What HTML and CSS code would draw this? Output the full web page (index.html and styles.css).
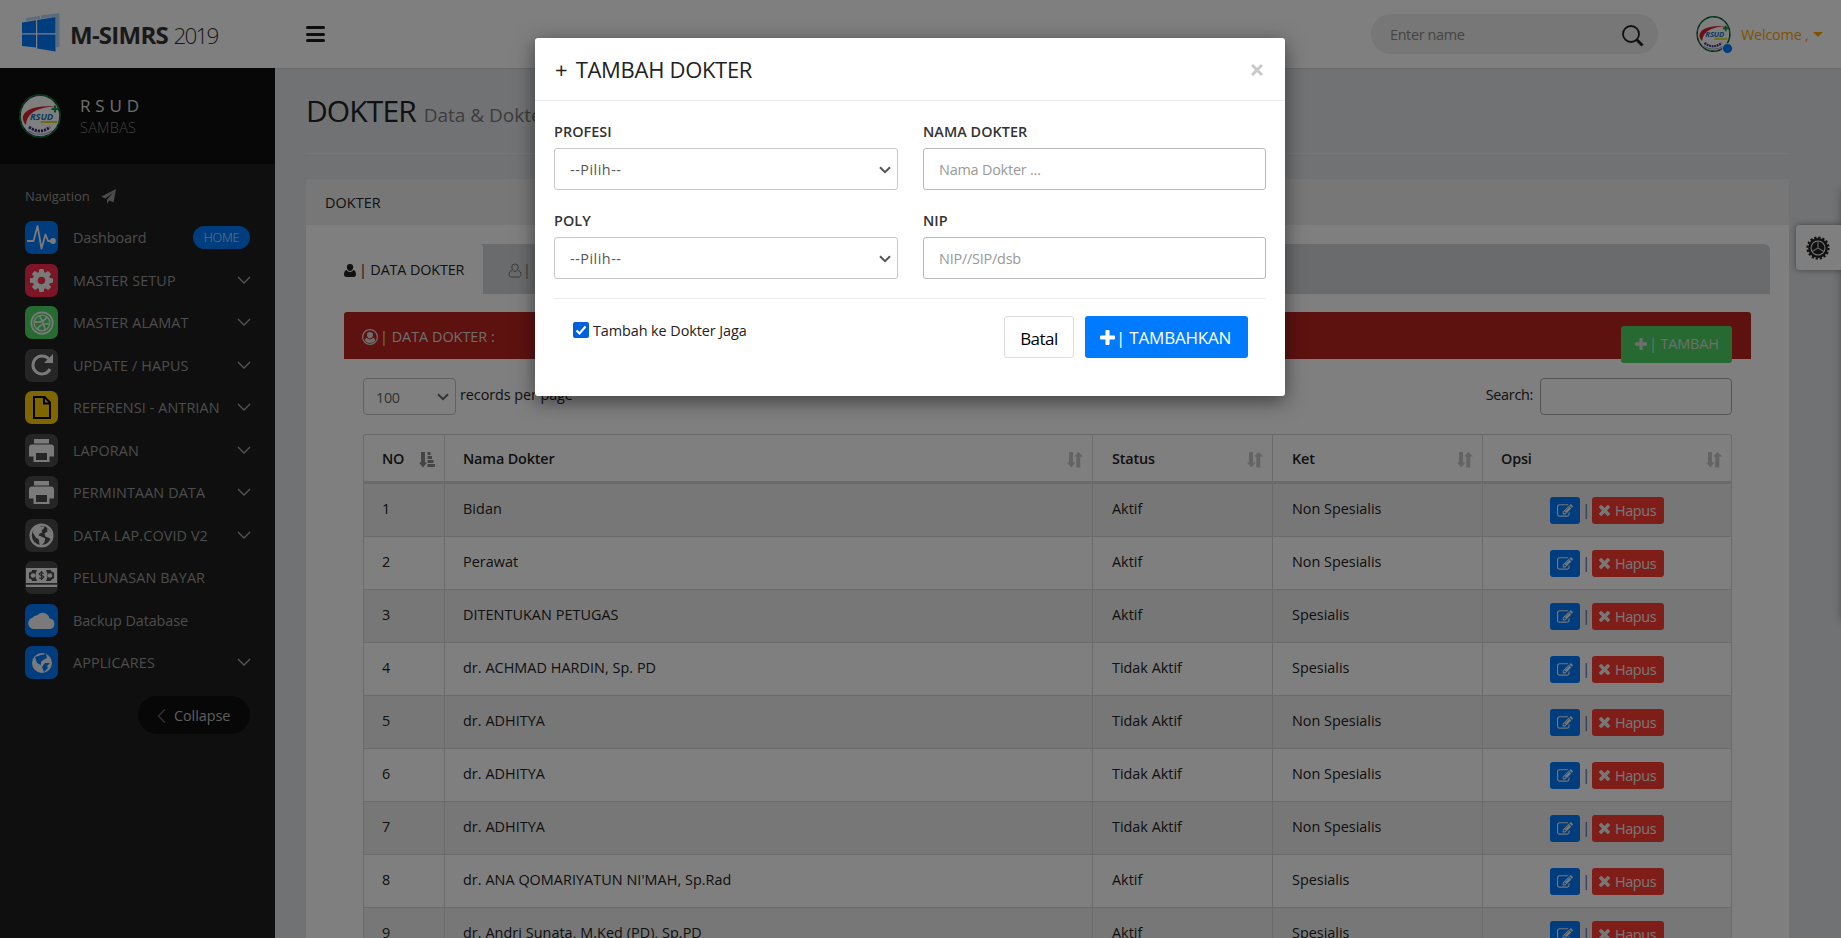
FILE: index.html
```html
<!DOCTYPE html>
<html lang="id">
<head>
<meta charset="utf-8">
<title>M-SIMRS 2019</title>
<link rel="stylesheet" href="styles.css">
</head>
<body>
<svg class="defs" width="0" height="0">
  <symbol id="plus" viewBox="192 128 1408 1408"><path d="M1600 736v192q0 40-28 68t-68 28h-416v416q0 40-28 68t-68 28h-192q-40 0-68-28t-28-68v-416h-416q-40 0-68-28t-28-68v-192q0-40 28-68t68-28h416v-416q0-40 28-68t68-28h192q40 0 68 28t28 68v416h416q40 0 68 28t28 68z"/></symbol>
  <symbol id="times" viewBox="302 366 1188 1188"><path d="M1490 1322q0 40-28 68l-136 136q-28 28-68 28t-68-28l-294-294-294 294q-28 28-68 28t-68-28l-136-136q-28-28-28-68t28-68l294-294-294-294q-28-28-28-68t28-68l136-136q28-28 68-28t68 28l294 294 294-294q28-28 68-28t68 28l136 136q28 28 28 68t-28 68l-294 294 294 294q28 28 28 68z"/></symbol>
  <symbol id="edit" viewBox="0 0 1792 1792"><path d="M888 1184l116-116-152-152-116 116v56h96v96h56zm440-720q-16-16-33 1l-350 350q-17 17-1 33t33-1l350-350q17-17 1-33zm80 594v190q0 119-84.500 203.500t-203.500 84.500h-832q-119 0-203.500-84.500t-84.500-203.500v-832q0-119 84.500-203.500t203.500-84.500h832q63 0 117 25 15 7 18 23 3 17-9 29l-49 49q-14 14-32 8-23-6-45-6h-832q-66 0-113 47t-47 113v832q0 66 47 113t113 47h832q66 0 113-47t47-113v-126q0-13 9-22l64-64q15-15 35-7t20 29zm-96-738l288 288-672 672h-288v-288zm444 132l-92 92-288-288 92-92q28-28 68-28t68 28l152 152q28 28 28 68t-28 68z"/></symbol>
  <symbol id="cog" viewBox="128 128 1536 1536"><path d="M1152 896q0-106-75-181t-181-75-181 75-75 181 75 181 181 75 181-75 75-181zm512-109v222q0 12-8 23t-20 13l-185 28q-19 54-39 91 35 50 107 138 10 12 10 25t-9 23q-27 37-99 108t-94 71q-12 0-26-9l-138-108q-44 23-91 38-16 136-29 186-7 28-36 28h-222q-14 0-24.500-8.500t-11.500-21.500l-28-184q-49-16-90-37l-141 107q-10 9-25 9-14 0-25-11-126-114-165-168-7-10-7-23 0-12 8-23 15-21 51-66.500t54-70.500q-27-50-41-99l-183-27q-13-2-21-12.500t-8-23.500v-222q0-12 8-23t19-13l186-28q14-46 39-92-40-57-107-138-10-12-10-24 0-10 9-23 26-36 98.500-107.500t94.500-71.500q13 0 26 10l138 107q44-23 91-38 16-136 29-186 7-28 36-28h222q14 0 24.500 8.500t11.500 21.500l28 184q49 16 90 37l142-107q9-9 24-9 13 0 25 10 129 119 165 170 7 8 7 22 0 12-8 23-15 21-51 66.500t-54 70.500q26 50 41 98l183 28q13 2 21 12.500t8 23.500z"/></symbol>
  <symbol id="printer" viewBox="0 0 25 23"><path fill-rule="evenodd" d="M5 0h15v4.500H5zM3 5.500h19a3 3 0 0 1 3 3v9h-4.500V23h-16v-5.500H0v-9a3 3 0 0 1 3-3zM7 14v7h11v-7z"/></symbol>
  <symbol id="down" viewBox="0 0 14 9"><path d="M1 1l6 6 6-6" fill="none" stroke="currentColor" stroke-width="1.300"/></symbol>
  <symbol id="caret" viewBox="0 0 12 8"><path d="M1 1.200l5 5 5-5" fill="none" stroke="currentColor" stroke-width="2"/></symbol>
  <symbol id="sort" viewBox="0 0 16 16"><path d="M2 0h4v10.500h2.500L4.300 15.500 0 10.500h2zM9.300 15.500h4V4.500H16L11.500 0 7.200 4.500h2.100z"/></symbol>
  <symbol id="sorted" viewBox="0 0 16 16"><path d="M2 0h4v10.500h2L3.900 15.500 0 10.500h2zM8.500 0h3v3h-3zM8.500 4h4.500v3H8.500zM8.500 8h6v3h-6zM8.500 12h7.500v3H8.500z"/></symbol>
  <symbol id="user" viewBox="0 0 12 13"><path d="M6 0a3.200 3.200 0 0 1 3.200 3.300C9.200 5.200 7.800 7 6 7S2.800 5.200 2.800 3.300A3.200 3.200 0 0 1 6 0zM2.600 6C3.400 7.200 4.600 7.900 6 7.900S8.600 7.200 9.400 6C11.300 6.200 12 8.500 12 10.600 12 12 11 13 9.800 13H2.200C1 13 0 12 0 10.600 0 8.500.7 6.200 2.600 6z"/></symbol>
  <symbol id="earth" viewBox="0 0 26 26"><circle cx="13" cy="13" r="11.300" fill="none" stroke="currentColor" stroke-width="2.400"/><path d="M10 2l3 2 2-1 1 2-3 3 1 2-3 1-1 2 3 1 4 2-1 4-4 5-1-3-1-5-3-2-3-5 1-4zM19 5l4 5 0 7-3-2-3-1-1-3 3-2z"/></symbol>
  <symbol id="crest" viewBox="0 0 42 44">
    <ellipse cx="21" cy="22" rx="20" ry="21" fill="#fff" stroke="#0e7d3e" stroke-width="1.800"/>
    <ellipse cx="21" cy="22" rx="20" ry="21" fill="none" stroke="#333" stroke-width="1.200" stroke-dasharray="3 5"/>
    <path d="M7 31C-2 21 8 10 37 12.500 20 13 8 18 7 31z" fill="#d8232a"/>
    <path d="M36 11.500v7M32.500 15h7" stroke="#17924a" stroke-width="2.200"/>
    <text x="11" y="25.500" class="crest-name">RSUD</text>
    <path d="M22 28h16" stroke="#e3d21c" stroke-width="2"/>
    <path d="M10 33q11 8 21 0" fill="none" stroke="#3a2a86" stroke-width="2.800" stroke-dasharray="2.200 1"/>
    <path d="M9 37q12 7 24 0" fill="none" stroke="#a79cc8" stroke-width="1.200"/>
  </symbol>
</svg>

<header class="topbar">
  <div class="brand">
    <svg width="38" height="39" viewBox="0 0 38 39"><path fill="#b5d6fb" d="M4 5l14-2v31L4 33zM19 2.500L37.500 0v34L19 35z"/><path fill="#fff" d="M0 8.500L34 3.500V39L0 34z"/><path fill="#007aff" d="M0 9.500l14-2.300v13H0zM15.200 7L33.500 4v16.200H15.200zM0 21.500h14v13L0 33zM15.200 21.500h18.300V38.500l-18.300-3z"/></svg>
    <div class="brand-name"><b>M-SIMRS</b> <span>2019</span></div>
  </div>
  <div class="burger"><i></i><i></i><i></i></div>
  <div class="top-search"><span>Enter name</span>
    <svg width="22" height="22" viewBox="0 0 22 22" fill="none" stroke="#222"><circle cx="9" cy="9" r="8" stroke-width="1.800"/><path d="M14.500 14.500l6 6" stroke-width="3"/></svg>
  </div>
  <div class="account">
    <div class="account-pic"><svg width="35" height="36"><use href="#crest"/></svg><i class="online"></i></div>
    <span class="welcome">Welcome ,</span><i class="tri"></i>
  </div>
</header>

<div class="shell">
  <aside class="side">
    <div class="hospital">
      <svg width="42" height="44"><use href="#crest"/></svg>
      <div><div class="h-name">R S U D</div><div class="h-city">SAMBAS</div></div>
    </div>
    <div class="nav-title"><span>Navigation</span><svg width="15" height="15" viewBox="0 0 15 15"><path d="M15 0l-2.500 13.200-4.300-1.800L6 15v-4.600L12.500 3 4.500 9.500.2 7.800z"/></svg></div>
    <nav class="menu">
      <div class="item mixed"><i class="ico blue"><svg width="29" height="25" viewBox="0 0 29 25"><path d="M0 16h6.500L10.500 1l4 22.500 4-14 2.500 6.500h3" fill="none" stroke="currentColor" stroke-width="1.800" stroke-linejoin="round"/><circle cx="26" cy="16" r="2.900"/></svg></i><span>Dashboard</span><em class="home">HOME</em></div>
      <div class="item"><i class="ico red"><svg width="23" height="23"><use href="#cog"/></svg></i><span>MASTER SETUP</span><svg class="chev" width="14" height="9"><use href="#down"/></svg></div>
      <div class="item"><i class="ico green"><svg width="24" height="24" viewBox="0 0 24 24" fill="none" stroke="currentColor"><circle cx="12" cy="12" r="10.700" stroke-width="1.700"/><circle cx="12" cy="12" r="7.900" stroke-width="1.400"/><path d="M9 4.500q4 5 6 14M4.500 11q9 1 12.500-5M7 18.500q4-7 12.500-5.500" stroke-width="1.600"/></svg></i><span>MASTER ALAMAT</span><svg class="chev" width="14" height="9"><use href="#down"/></svg></div>
      <div class="item"><i class="ico gray"><svg width="22" height="22" viewBox="0 0 22 22"><path d="M17.500 4.800A9 9 0 1 0 19 15" fill="none" stroke="currentColor" stroke-width="3"/><path d="M22 0v9h-9z"/></svg></i><span>UPDATE / HAPUS</span><svg class="chev" width="14" height="9"><use href="#down"/></svg></div>
      <div class="item"><i class="ico yellow"><svg width="18" height="23" viewBox="0 0 18 23" fill="none" stroke="#000" stroke-width="2"><path d="M1 1h10.500L17 6.500V22H1zM11 1v6.500h6"/></svg></i><span>REFERENSI - ANTRIAN</span><svg class="chev" width="14" height="9"><use href="#down"/></svg></div>
      <div class="item"><i class="ico gray"><svg width="25" height="23"><use href="#printer"/></svg></i><span>LAPORAN</span><svg class="chev" width="14" height="9"><use href="#down"/></svg></div>
      <div class="item"><i class="ico gray"><svg width="25" height="23"><use href="#printer"/></svg></i><span>PERMINTAAN DATA</span><svg class="chev" width="14" height="9"><use href="#down"/></svg></div>
      <div class="item"><i class="ico gray"><svg width="25" height="25"><use href="#earth"/></svg></i><span>DATA LAP.COVID V2</span><svg class="chev" width="14" height="9"><use href="#down"/></svg></div>
      <div class="item"><i class="ico gray"><svg width="31" height="19" viewBox="0 0 31 19"><path fill-rule="evenodd" d="M0 0h31v15H0zM6 2Q6 4 3 4.500v6Q6 11 6 13h5Q8 7.500 11 2zM20 2q3 5.500 0 11h5q0-2 3-2.500v-6Q25 4 25 2zM0 16.700h31V19H0z"/><circle cx="7" cy="7.500" r="2.300"/><circle cx="24" cy="7.500" r="2.300"/><path d="M17.500 5.500Q15.500 4 13.800 5.300t1.700 2.200 1.600 2.300-3.900 0M15.500 3v9" fill="none" stroke="#4a4a4a" stroke-width="1.200"/></svg></i><span>PELUNASAN BAYAR</span></div>
      <div class="item mixed"><i class="ico blue"><svg width="27" height="17" viewBox="0 0 27 17"><path d="M6 17a5.800 5.800 0 0 1-1-11.500Q6 3 9 3.500a7 7 0 0 1 12.500 3A5.300 5.300 0 0 1 22 17z"/></svg></i><span>Backup Database</span></div>
      <div class="item"><i class="ico blue"><svg width="20" height="20" viewBox="0 0 20 20"><path fill-rule="evenodd" d="M10 0a10 10 0 1 1 0 20 10 10 0 0 1 0-20zM3 4l2 6 4 2 0-3 2-2 4-2-1-4-5 1zM13 10l-3 4 2 5 4-4-1-2 3-3z"/></svg></i><span>APPLICARES</span><svg class="chev" width="14" height="9"><use href="#down"/></svg></div>
    </nav>
    <div class="collapse"><svg width="9" height="14" viewBox="0 0 9 14"><path d="M8 .5L1.500 7 8 13.500" fill="none" stroke="#666" stroke-width="1.300"/></svg><span>Collapse</span></div>
  </aside>

  <main class="main">
    <h1 class="page-title">DOKTER <small>Data &amp; Dokter</small></h1>
    <section class="panel">
      <div class="panel-head">DOKTER</div>
      <div class="panel-body">
        <div class="tabs">
          <div class="tab active"><svg width="12" height="13"><use href="#user"/></svg><span>| DATA DOKTER</span></div>
          <div class="tab"><svg width="14" height="15" viewBox="-1 -1 14 15" fill="none" stroke="currentColor"><path d="M6 0a3.200 3.200 0 0 1 3.200 3.300C9.200 5.200 7.800 7.500 6 7.500S2.800 5.200 2.800 3.300A3.200 3.200 0 0 1 6 0zM3.300 6.500C1.300 6.500 0 8.500 0 10.600 0 12 1 13 2.200 13h7.600C11 13 12 12 12 10.600 12 8.500 10.800 6.500 8.800 6.500"/></svg><span>| D</span></div>
        </div>
        <div class="banner">
          <svg width="16" height="16" viewBox="0 0 16 16"><circle cx="8" cy="8" r="7.400" fill="none" stroke="currentColor" stroke-width="1.200"/><path d="M8 3a3 3 0 0 1 3 3.200C11 8 9.700 9.600 8 9.600S5 8 5 6.200A3 3 0 0 1 8 3zM4.500 8.800Q8 12 11.500 8.800q2 1 1.600 3A7 7 0 0 1 8 14a7 7 0 0 1-5.100-2.200q-.4-2 1.600-3z"/></svg>
          <span>| DATA DOKTER :</span>
          <div class="add"><svg width="12" height="12"><use href="#plus"/></svg><span>| TAMBAH</span></div>
        </div>
        <div class="controls">
          <div class="length"><span>100</span><svg width="12" height="8"><use href="#caret"/></svg></div>
          <span class="per-page">records per page</span>
          <span class="search-label">Search:</span><div class="search-box"></div>
        </div>
        <table class="grid">
          <colgroup><col class="c-no"><col class="c-name"><col class="c-status"><col class="c-ket"><col class="c-opsi"></colgroup>
          <thead><tr>
            <th><div>NO<svg class="sorted" width="16" height="16"><use href="#sorted"/></svg></div></th>
            <th><div>Nama Dokter<svg width="16" height="16"><use href="#sort"/></svg></div></th>
            <th><div>Status<svg width="16" height="16"><use href="#sort"/></svg></div></th>
            <th><div>Ket<svg width="16" height="16"><use href="#sort"/></svg></div></th>
            <th><div>Opsi<svg width="16" height="16"><use href="#sort"/></svg></div></th>
          </tr></thead>
          <tbody>
            <tr><td>1</td><td>Bidan</td><td>Aktif</td><td>Non Spesialis</td><td class="ops"><div><b class="edit"><svg width="16" height="16"><use href="#edit"/></svg></b><i>|</i><b class="del"><svg width="11" height="11"><use href="#times"/></svg>Hapus</b></div></td></tr>
            <tr><td>2</td><td>Perawat</td><td>Aktif</td><td>Non Spesialis</td><td class="ops"><div><b class="edit"><svg width="16" height="16"><use href="#edit"/></svg></b><i>|</i><b class="del"><svg width="11" height="11"><use href="#times"/></svg>Hapus</b></div></td></tr>
            <tr><td>3</td><td>DITENTUKAN PETUGAS</td><td>Aktif</td><td>Spesialis</td><td class="ops"><div><b class="edit"><svg width="16" height="16"><use href="#edit"/></svg></b><i>|</i><b class="del"><svg width="11" height="11"><use href="#times"/></svg>Hapus</b></div></td></tr>
            <tr><td>4</td><td>dr. ACHMAD HARDIN, Sp. PD</td><td>Tidak Aktif</td><td>Spesialis</td><td class="ops"><div><b class="edit"><svg width="16" height="16"><use href="#edit"/></svg></b><i>|</i><b class="del"><svg width="11" height="11"><use href="#times"/></svg>Hapus</b></div></td></tr>
            <tr><td>5</td><td>dr. ADHITYA</td><td>Tidak Aktif</td><td>Non Spesialis</td><td class="ops"><div><b class="edit"><svg width="16" height="16"><use href="#edit"/></svg></b><i>|</i><b class="del"><svg width="11" height="11"><use href="#times"/></svg>Hapus</b></div></td></tr>
            <tr><td>6</td><td>dr. ADHITYA</td><td>Tidak Aktif</td><td>Non Spesialis</td><td class="ops"><div><b class="edit"><svg width="16" height="16"><use href="#edit"/></svg></b><i>|</i><b class="del"><svg width="11" height="11"><use href="#times"/></svg>Hapus</b></div></td></tr>
            <tr><td>7</td><td>dr. ADHITYA</td><td>Tidak Aktif</td><td>Non Spesialis</td><td class="ops"><div><b class="edit"><svg width="16" height="16"><use href="#edit"/></svg></b><i>|</i><b class="del"><svg width="11" height="11"><use href="#times"/></svg>Hapus</b></div></td></tr>
            <tr><td>8</td><td>dr. ANA QOMARIYATUN NI'MAH, Sp.Rad</td><td>Aktif</td><td>Spesialis</td><td class="ops"><div><b class="edit"><svg width="16" height="16"><use href="#edit"/></svg></b><i>|</i><b class="del"><svg width="11" height="11"><use href="#times"/></svg>Hapus</b></div></td></tr>
            <tr><td>9</td><td>dr. Andri Sunata, M.Ked (PD), Sp.PD</td><td>Aktif</td><td>Spesialis</td><td class="ops"><div><b class="edit"><svg width="16" height="16"><use href="#edit"/></svg></b><i>|</i><b class="del"><svg width="11" height="11"><use href="#times"/></svg>Hapus</b></div></td></tr>
          </tbody>
        </table>
      </div>
    </section>
  </main>
</div>

<div class="drawer-edge"></div>
<div class="drawer-tab"><svg width="24" height="24" viewBox="0 0 24 24" fill="none" stroke="#222"><circle cx="12" cy="12" r="8.700" stroke-width="2.400"/><circle cx="12" cy="12" r="10.500" stroke-width="2.200" stroke-dasharray="2.300 1.820"/><circle cx="12" cy="12" r="6.500" fill="#222" stroke="none"/><path d="M12 12V5.500M12 12l5.500 3.200M12 12l-5.500 3.200" stroke="#ccc" stroke-width="1.100"/></svg></div>

<div class="backdrop">
  <div class="modal">
    <div class="modal-head"><h2><span>+</span> TAMBAH DOKTER</h2><svg width="12" height="12" viewBox="0 0 12 12"><path d="M1 1l10 10M11 1L1 11" stroke="#c9c9c9" stroke-width="3"/></svg></div>
    <div class="modal-body">
      <div class="fields">
        <div class="field"><label>PROFESI</label><div class="select"><span>--Pilih--</span><svg width="12" height="8"><use href="#caret"/></svg></div></div>
        <div class="field"><label>NAMA DOKTER</label><div class="input">Nama Dokter ...</div></div>
        <div class="field"><label>POLY</label><div class="select"><span>--Pilih--</span><svg width="12" height="8"><use href="#caret"/></svg></div></div>
        <div class="field"><label>NIP</label><div class="input">NIP//SIP/dsb</div></div>
      </div>
      <div class="actions">
        <svg class="check" width="16" height="16" viewBox="0 0 16 16"><rect width="16" height="16" rx="2" fill="#0060df"/><path d="M3.500 8.500l3 3 6-7" fill="none" stroke="#fff" stroke-width="2.200"/></svg>
        <span class="check-text">Tambah ke Dokter Jaga</span>
        <div class="cancel">Batal</div>
        <div class="submit"><svg width="15" height="15"><use href="#plus"/></svg><span>| TAMBAHKAN</span></div>
      </div>
    </div>
  </div>
</div>
</body>
</html>
```

FILE: styles.css
```css
* { box-sizing: border-box; }
html, body { height: 938px; overflow: hidden; }
body { margin: 0; background: #e1e4e8; color: #222; font-family: "Open Sans", "Noto Sans", sans-serif; font-size: 14.400px; line-height: 22px; letter-spacing: 0; white-space: nowrap; position: relative; }
svg { display: block; flex: none; }
svg:not([fill]) { fill: currentColor; }
i, em { font-style: normal; }
.defs { position: absolute; }
.crest-name { font: italic bold 9.500px "Open Sans", sans-serif; fill: #1c75bc; letter-spacing: -0.200px; }

.topbar { height: 68px; background: #fff; display: flex; align-items: center; }
.brand { width: 306px; padding: 0 0 4px 22px; display: flex; align-items: center; gap: 10px; }
.brand-name { font-size: 24px; line-height: 32px; letter-spacing: -0.750px; color: #333; padding-top: 7px; }
.brand-name span { font-size: 22.500px; font-weight: 300; letter-spacing: -1.800px; }
.burger { width: 19px; display: flex; flex-direction: column; gap: 3.500px; }
.burger i { height: 3px; border-radius: 2px; background: #1a1a1a; }
.top-search { margin-left: auto; width: 287px; height: 40px; border-radius: 20px; background: #eee; display: flex; align-items: center; justify-content: space-between; padding: 0 14px 0 19px; color: #8a8a8a; letter-spacing: -0.350px; }
.top-search span { margin-top: 2px; }
.top-search svg { margin-top: 3px; }
.account { width: 183px; padding: 0 18px 0 38px; display: flex; align-items: center; color: #ffa500; letter-spacing: -0.200px; }
.welcome { margin-top: 2px; }
.account-pic { position: relative; width: 35px; margin-right: 10px; }
.online { position: absolute; right: -2px; bottom: -2px; width: 11px; height: 11px; border-radius: 50%; background: #007aff; border: 1px solid #fff; }
.tri { border: 5px solid transparent; border-top-color: #ffa500; border-bottom: 0; margin-left: auto; }

.shell { display: flex; height: 870px; overflow: hidden; }
.side { width: 275px; background: #1f1f1f; color: #999; flex: none; }
.hospital { height: 96px; background: #0e0e0e; display: flex; align-items: center; gap: 19px; padding-left: 19px; }
.h-name { font-size: 17px; color: #ddd; letter-spacing: .2px; line-height: 22px; padding-top: 2px; }
.h-city { color: #858585; letter-spacing: .3px; line-height: 22px; font-weight: 300; }
.nav-title { height: 50px; padding: 14px 0 0 25px; display: flex; align-items: center; gap: 11px; font-size: 13px; letter-spacing: 0; }
.nav-title svg { margin-top: 1px; }
.menu { padding: 7px 24px 0 25px; }
.item { height: 42.500px; display: flex; align-items: flex-start; line-height: 34px; letter-spacing: .1px; }
.mixed { letter-spacing: -0.100px; }
.item span { margin-left: 15px; }
.ico { width: 33px; height: 33px; border-radius: 7px; display: flex; align-items: center; justify-content: center; color: #f4f4f4; }
.blue { background: #007aff; }
.red { background: #f92d4d; }
.green { background: #4cd964; }
.gray { background: #4a4a4a; }
.yellow { background: #ffcc00; }
.chev { margin: 12px 0 0 auto; color: #aaa; }
.home { margin: 5px 1px 0 auto; width: 57px; height: 23px; border-radius: 12px; background: #007aff; color: #dce9f8; font-weight: 300; font-size: 12.500px; line-height: 24px; text-align: center; letter-spacing: -0.200px; }
.collapse { margin: 7.500px 25px 0 auto; width: 112px; height: 38px; border-radius: 19px; background: #0e0e0e; color: #bbb; display: flex; align-items: center; padding: 2px 0 0 19px; gap: 8px; letter-spacing: -0.050px; }

.main { flex: 1; padding: 0 52px 0 31px; border-top: 1px solid #d2d4d6; }
.page-title { margin: 0; height: 85px; border-bottom: 1px solid #eceef0; font-size: 30px; font-weight: 400; line-height: 40px; padding: 22px 0 0 0; letter-spacing: -0.900px; }
.page-title small { font-size: 19px; color: #7a7a7a; letter-spacing: 0; margin-left: 1px; }
.panel { margin-top: 25px; background: #fff; height: 800px; border-radius: 3px 3px 0 0; }
.panel-head { height: 46px; line-height: 47px; padding-left: 19px; background: #efefef; border-radius: 3px 3px 0 0; letter-spacing: .1px; }
.panel-body { padding: 19px 19px 0; }
.tabs { height: 50px; background: #d2d6d8; border-radius: 0 6px 0 0; display: flex; }
.tab { display: flex; align-items: center; gap: 1px; color: #777; padding: 2px 0 0 25px; letter-spacing: -0.300px; }
.tab.active { width: 158px; padding-left: 19px; gap: 3px; background: #fff; border-radius: 0 4px 0 0; color: #222; letter-spacing: -0.150px; }
.banner { margin: 18px 19px 0; height: 47px; background: #bb2420; border-radius: 3px 3px 0 0; color: #ddd; display: flex; align-items: center; padding: 2px 19px 0 18px; gap: 2px; }
.add { margin: 15px 0 0 auto; height: 37px; width: 111px; border-radius: 3px; background: #4cd562; display: flex; align-items: center; gap: 2px; padding-left: 14px; letter-spacing: -0.100px; }
.controls { margin: 19px 38px 0; height: 37px; display: flex; color: #222; line-height: 33px; }
.length { width: 93px; border: 1px solid #c4c4c4; border-radius: 4px; display: flex; align-items: center; justify-content: space-between; padding: 1px 6px 0 12px; color: #666; letter-spacing: -0.300px; }
.per-page { margin-left: 4px; letter-spacing: -0.070px; }
.search-label { margin-left: auto; letter-spacing: -0.300px; }
.search-box { margin-left: 7px; width: 192px; border: 1px solid #aaa; border-radius: 4px; }
.grid { margin: 19px 38px 0; width: 1369px; table-layout: fixed; border-collapse: separate; border-spacing: 0; border-top: 1px solid #d6d6d6; border-left: 1px solid #d6d6d6; border-radius: 3px 3px 0 0; }
.c-no { width: 81px; } .c-name { width: 648px; } .c-status { width: 180px; } .c-ket { width: 210px; } .c-opsi { width: 249px; }
.grid th, .grid td { border-right: 1px solid #d6d6d6; text-align: left; padding: 0 0 0 18px; }
.grid th:nth-child(3), .grid td:nth-child(3), .grid th:nth-child(4), .grid td:nth-child(4) { padding-left: 19px; }
.grid th { height: 49px; border-bottom: 3px solid #d6d6d6; font-weight: 600; padding-right: 9px; padding-top: 1px; letter-spacing: -0.150px; color: #222; }
.grid th div { display: flex; align-items: center; justify-content: space-between; }
.grid th svg { color: #c8c8c8; margin-top: 3px; }
.grid th .sorted { color: #8a8a8a; }
.grid td { height: 53px; border-bottom: 1px solid #d6d6d6; vertical-align: top; line-height: 50px; }
.grid td:nth-child(2) { letter-spacing: .050px; }
.grid tbody tr:nth-child(odd) { background: #efefef; }
.grid .ops { padding: 13px 0 0 67px; }
.ops div { display: flex; height: 27px; line-height: 28px; color: #eee; letter-spacing: -0.400px; }
.ops b { font-weight: 400; display: flex; align-items: center; border-radius: 3px; }
.ops i { width: 12px; text-align: center; color: #555; line-height: 25px; }
.edit { width: 30px; background: #007aff; padding-left: 7px; }
.del { width: 72px; background: #ff3b30; padding-left: 7px; gap: 5px; }

.drawer-edge { position: absolute; left: 1841px; top: 190px; width: 20px; height: 430px; box-shadow: 0 0 8px rgba(0, 0, 0, .3); }
.drawer-tab { position: absolute; left: 1796px; top: 225px; width: 50px; height: 45px; background: #fff; border-radius: 4px; box-shadow: 0 0 6px rgba(0, 0, 0, .4); padding: 11px 0 0 10px; }

.backdrop { position: absolute; inset: 0; background: rgba(0, 0, 0, .5); padding-top: 38px; }
.modal { width: 750px; height: 358px; margin-left: 535px; background: #fff; border-radius: 3px; box-shadow: 0 5px 20px rgba(0, 0, 0, .5); }
.modal-head { height: 63px; border-bottom: 1px solid #ebebeb; display: flex; align-items: center; justify-content: space-between; padding: 2px 22px 0 20px; }
.modal-head h2 { margin: 0 0 3px; font-size: 22px; font-weight: 400; letter-spacing: -0.300px; line-height: 30px; }
.modal-head h2 span { margin-right: 3px; }
.modal-body { padding: 19px 19px 0; }
.fields { display: grid; grid-template-columns: 344px 343px; column-gap: 25px; }
.field { height: 89px; }
.field label { display: block; height: 28px; line-height: 24px; font-weight: 600; letter-spacing: .050px; color: #333; }
.select, .input { height: 42px; border: 1px solid #b8b8b8; border-radius: 3px; padding: 2px 6px 0 15px; color: #999; display: flex; align-items: center; justify-content: space-between; letter-spacing: -0.200px; }
.select { border-color: #c8c8c8; color: #555; letter-spacing: .500px; }
.actions { border-top: 1px solid #ebebeb; display: flex; padding: 17px 18px 0 19px; }
.check { margin: 6px 4px 0 0; }
.check-text { line-height: 30px; letter-spacing: -0.070px; }
.cancel, .submit { height: 42px; border-radius: 3px; font-size: 17px; line-height: 44px; letter-spacing: -0.500px; }
.cancel { margin-left: auto; width: 70px; border: 1px solid #ddd; text-align: center; color: #000; }
.submit { margin-left: 11px; width: 163px; background: #007aff; color: #fff; display: flex; align-items: center; gap: 1px; padding-left: 15px; letter-spacing: -0.200px; }
.submit span { margin-top: 2px; }
```
